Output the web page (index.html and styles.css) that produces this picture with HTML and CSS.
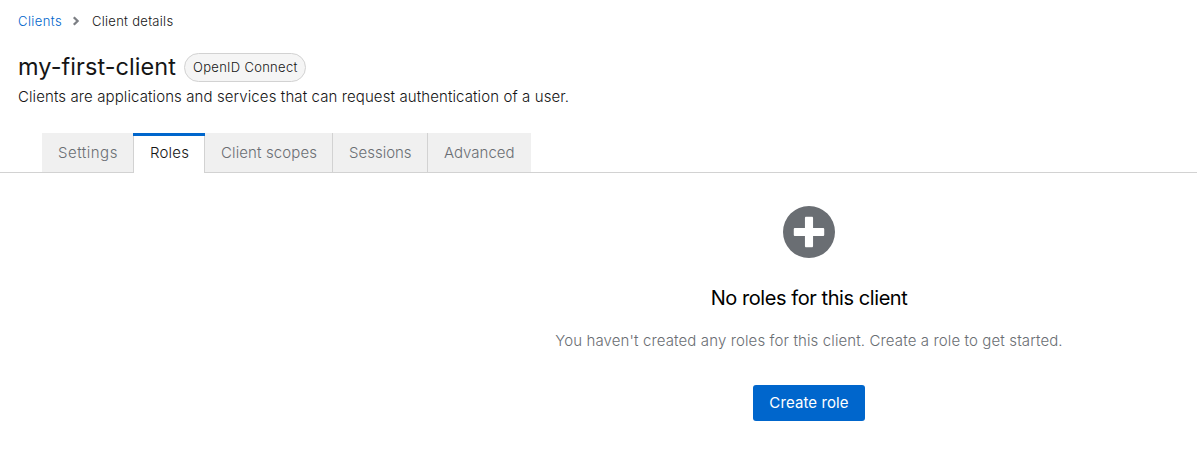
FILE: index.html
```html
<!DOCTYPE html>
<html lang="en">
<head>
<meta charset="utf-8">
<title>Client details</title>
<link rel="stylesheet" href="styles.css">
</head>
<body>
<header class="page-header">
  <nav class="breadcrumb">
    <a class="crumb-link" href="#">Clients</a>
    <svg class="chevron" viewBox="0 0 8 10"><path d="M1.8 1.2 5.6 5 1.8 8.8" fill="none" stroke="#7c7f84" stroke-width="2.3"/></svg>
    <span class="crumb-current">Client details</span>
  </nav>
  <div class="title-row">
    <h1 class="title">my-first-client</h1>
    <span class="badge">OpenID Connect</span>
  </div>
  <p class="description">Clients are applications and services that can request authentication of a user.</p>
</header>
<nav class="tabs">
  <a class="tab tab-settings" href="#">Settings</a>
  <a class="tab tab-roles current" href="#">Roles</a>
  <a class="tab tab-scopes" href="#">Client scopes</a>
  <a class="tab tab-sessions" href="#">Sessions</a>
  <a class="tab tab-advanced" href="#">Advanced</a>
</nav>
<main class="empty-state">
  <svg class="plus-icon" viewBox="0 0 512 512"><path fill="#6a6e73" d="M256 0a256 256 0 1 0 0 512a256 256 0 0 0 0-512zm150 284c0 7-5 12-12 12h-98v98c0 7-5 12-12 12h-56c-7 0-12-5-12-12v-98h-98c-7 0-12-5-12-12v-56c0-7 5-12 12-12h98v-98c0-7 5-12 12-12h56c7 0 12 5 12 12v98h98c7 0 12 5 12 12z"/></svg>
  <h2 class="empty-title">No roles for this client</h2>
  <p class="empty-body">You haven't created any roles for this client. Create a role to get started.</p>
  <button class="create" type="button">Create role</button>
</main>
</body>
</html>
```

FILE: styles.css
```css
* { box-sizing: border-box; }
body { margin: 0; background: #fff; color: #151515; font-family: Inter, "Open Sans", sans-serif; font-weight: 300; font-size: 15px; white-space: nowrap; }
h1, h2, p { margin: 0; font-weight: 400; }
a { text-decoration: none; }
.page-header { height: 133px; padding: 10px 18px 0; }
.breadcrumb { display: flex; align-items: center; height: 21px; font-size: 13px; }
.crumb-link { width: 54px; color: #06c; letter-spacing: 0.42px; }
.chevron { width: 8px; height: 10px; margin-right: 12px; }
.crumb-current { letter-spacing: 0.28px; }
.title-row { display: flex; align-items: center; height: 31px; margin-top: 21px; }
.title { width: 166px; height: 33px; font-size: 23.5px; line-height: 31px; letter-spacing: 0.06px; }
.badge { width: 122px; height: 29px; margin-top: -1px; border: 1px solid #d2d2d2; border-radius: 15px; background: #f5f5f5; font-size: 13px; line-height: 27px; padding-left: 8px; letter-spacing: 0.3px; }
.description { height: 24px; margin-top: 2px; line-height: 24px; font-weight: 300; letter-spacing: 0.1px; }
.tabs { display: flex; height: 40px; padding-left: 42px; border-bottom: 1px solid #d2d2d2; }
.tab { height: 39px; padding-left: 16px; line-height: 39px; background: #f0f0f0; color: #6a6e73; border-right: 1px solid #d2d2d2; }
.tab-settings { width: 91px; border-right: 0; letter-spacing: 0.5px; }
.tab-roles { width: 72px; letter-spacing: 0.2px; }
.tab-scopes { width: 128px; letter-spacing: 0.12px; }
.tab-sessions { width: 95px; }
.tab-advanced { width: 103px; border-right: 0; }
.current { height: 40px; padding-left: 17px; color: #151515; border-right: 0; background: linear-gradient(#06c, #06c) 0 0 / 100% 3px no-repeat, linear-gradient(#d2d2d2, #d2d2d2) 0 0 / 1px 100% no-repeat, linear-gradient(#d2d2d2, #d2d2d2) 100% 0 / 1px 100% no-repeat, #fff; }
.empty-state { display: flex; flex-direction: column; align-items: center; margin-left: 421px; padding-top: 33px; }
.plus-icon { width: 52px; height: 52px; }
.empty-title { height: 30px; margin-top: 25px; font-size: 20px; line-height: 30px; color: #000; letter-spacing: -0.43px; }
.empty-body { height: 24px; margin-top: 16px; line-height: 24px; color: #6a6e73; font-weight: 300; letter-spacing: 0.12px; }
.create { width: 112px; height: 36px; margin-top: 32px; padding: 0; border: 0; border-radius: 3px; background: #06c; color: #fff; font: 400 15px/36px Inter, "Open Sans", sans-serif; letter-spacing: 0.1px; }
```
